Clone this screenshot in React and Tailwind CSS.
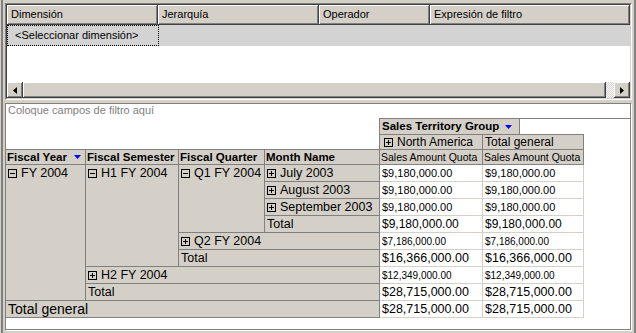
import React from 'react';

const raised = 'bg-[#d4d0c8] shadow-[inset_-1px_-1px_#404040,inset_1px_1px_#fff,inset_-2px_-2px_#808080]';

function ExpandBox({ minus }) {
  return (
    <svg width="9" height="9" viewBox="0 0 9 9" className="shrink-0">
      <rect x="0.5" y="0.5" width="8" height="8" fill="none" stroke="#000" />
      <line x1="2" y1="4.5" x2="7" y2="4.5" stroke="#000" />
      {!minus && <line x1="4.5" y1="2" x2="4.5" y2="7" stroke="#000" />}
    </svg>
  );
}

function BlueArrow() {
  return (
    <svg width="7" height="4" viewBox="0 0 7 4" className="shrink-0">
      <path d="M0 0H7L3.5 4Z" fill="#0000ff" />
    </svg>
  );
}

function ScrollButton({ dir }) {
  return (
    <div className={`w-[16px] h-full flex items-center justify-center ${raised}`}>
      <svg width="4" height="7" viewBox="0 0 4 7">
        <path d={dir === 'left' ? 'M4 0V7L0 3.5Z' : 'M0 0V7L4 3.5Z'} fill="#000" />
      </svg>
    </div>
  );
}

const filterCols = [
  { label: 'Dimensión', w: 'w-[151px]' },
  { label: 'Jerarquía', w: 'w-[161px]' },
  { label: 'Operador', w: 'w-[111px]' },
  { label: 'Expresión de filtro', w: 'w-[200px]' }
];

// row header cell (gray) in the pivot
function Head({ className, children, size = 'text-[12.5px]' }) {
  return (
    <div className={`bg-[#d4d0c8] border-r border-b border-[#808080] flex items-start gap-[4px] pl-[2px] h-full leading-[16px] whitespace-nowrap ${size} ${className}`}>
      {children}
    </div>
  );
}

const values = [
  { v: '$9,180,000.00', size: 'text-[11px]' },
  { v: '$9,180,000.00', size: 'text-[11px]' },
  { v: '$9,180,000.00', size: 'text-[11px]' },
  { v: '$9,180,000.00', size: 'text-[12px]' },
  { v: '$7,186,000.00', size: 'text-[10px]' },
  { v: '$16,366,000.00', size: 'text-[12.5px]' },
  { v: '$12,349,000.00', size: 'text-[10px]' },
  { v: '$28,715,000.00', size: 'text-[12.5px]' },
  { v: '$28,715,000.00', size: 'text-[12.5px]' }
];

const rowStart = ['row-start-4', 'row-start-5', 'row-start-6', 'row-start-7', 'row-start-8', 'row-start-9', 'row-start-10', 'row-start-11', 'row-start-12'];

export default function App() {
  return (
    <div className="w-[636px] h-[333px] bg-[#d4d0c8] overflow-hidden pl-px border-r-2 border-r-[#808080] font-['Liberation_Sans',Arial,sans-serif] text-black">
      <div className="h-full border-l-2 border-l-[#808080] pl-[2px] flex flex-col">
        {/* filter grid */}
        <div className="mt-[3px] w-[627px] h-[97px] border border-t-[#808080] border-l-[#808080] border-r-white border-b-white">
          <div className="h-full border border-t-[#404040] border-l-[#404040] border-r-[#d4d0c8] border-b-[#d4d0c8] flex flex-col bg-white">
            <div className="flex h-[20px]">
              {filterCols.map((c) => (
                <div key={c.label} className={`${c.w} ${raised} text-[11px] leading-[19px] pl-[4px]`}>
                  {c.label}
                </div>
              ))}
            </div>
            <div className="flex h-[21px] bg-[#d3d3d3]">
              <div className="w-[152px] border border-dotted border-black text-[11px] leading-[19px] pl-[7px]">
                &lt;Seleccionar dimensión&gt;
              </div>
            </div>
            <div className="flex-1" />
            <div className="flex h-[16px]">
              <ScrollButton dir="left" />
              <div className={`w-[583px] h-full ${raised}`} />
              <div className="w-[8px] h-full bg-[repeating-conic-gradient(#fff_0_25%,#d4d0c8_0_50%)] bg-[length:2px_2px]" />
              <ScrollButton dir="right" />
            </div>
          </div>
        </div>

        {/* pivot table */}
        <div className="mt-[3px] w-[626px] h-[227px] border border-[#808080] shadow-[1px_1px_0_#fff] bg-white flex flex-col">
          <div className="h-[14px] text-[11px] leading-[13px] text-[#808080] pl-[2px]">Coloque campos de filtro aquí</div>
          <div className="flex-1 grid grid-cols-[80px_93px_86px_115px_103px_101px_1fr] grid-rows-[17px_15px_15px_repeat(9,17px)_1fr]">
            {/* column area */}
            <div className="col-start-1 col-end-5 row-start-1 row-end-3 border-r border-b border-[#808080]" />
            <div className="col-start-5 col-end-7 row-start-1 border-t border-b border-[#808080] flex">
              <div className="w-[140px] bg-[#d4d0c8] border-r border-[#808080] flex items-center gap-[6px] pl-[2px] text-[11.5px] font-bold leading-[15px] whitespace-nowrap">
                Sales Territory Group
                <BlueArrow />
              </div>
            </div>
            <div className="col-start-7 row-start-1 border-t border-[#808080]" />
            <div className="col-start-5 row-start-2 bg-[#d4d0c8] border-r border-b border-[#808080] flex items-center gap-[4px] pl-[4px] text-[12px] leading-[14px] whitespace-nowrap">
              <ExpandBox />
              North America
            </div>
            <div className="col-start-6 row-start-2 bg-[#d4d0c8] border-r border-b border-[#808080] pl-[2px] text-[12px] leading-[14px] whitespace-nowrap">
              Total general
            </div>

            {/* row header titles */}
            <div className="col-start-1 row-start-3 bg-[#d4d0c8] border-r border-b border-[#808080] flex items-center gap-[7px] pl-[1px] text-[11.5px] font-bold leading-[14px] whitespace-nowrap">
              Fiscal Year
              <BlueArrow />
            </div>
            <div className="col-start-2 row-start-3 bg-[#d4d0c8] border-r border-b border-[#808080] pl-[1px] text-[11.5px] font-bold leading-[14px] whitespace-nowrap overflow-hidden">
              Fiscal Semester
            </div>
            <div className="col-start-3 row-start-3 bg-[#d4d0c8] border-r border-b border-[#808080] pl-[1px] text-[11.5px] font-bold leading-[14px] whitespace-nowrap">
              Fiscal Quarter
            </div>
            <div className="col-start-4 row-start-3 bg-[#d4d0c8] border-r border-b border-[#808080] pl-[1px] text-[11.5px] font-bold leading-[14px] whitespace-nowrap">
              Month Name
            </div>
            <div className="col-start-5 row-start-3 bg-[#d4d0c8] border-r border-b border-[#808080] pl-[1px] text-[10.5px] leading-[14px] whitespace-nowrap overflow-hidden">
              Sales Amount Quota
            </div>
            <div className="col-start-6 row-start-3 bg-[#d4d0c8] border-r border-b border-[#808080] pl-[1px] text-[10.5px] leading-[14px] whitespace-nowrap overflow-hidden">
              Sales Amount Quota
            </div>

            {/* row headers */}
            <Head className="col-start-1 row-start-4 row-end-12">
              <span className="h-[16px] flex items-center"><ExpandBox minus /></span>
              FY 2004
            </Head>
            <Head className="col-start-2 row-start-4 row-end-10">
              <span className="h-[16px] flex items-center"><ExpandBox minus /></span>
              H1 FY 2004
            </Head>
            <Head className="col-start-3 row-start-4 row-end-8">
              <span className="h-[16px] flex items-center"><ExpandBox minus /></span>
              Q1 FY 2004
            </Head>
            <Head className="col-start-4 row-start-4">
              <span className="h-[16px] flex items-center"><ExpandBox /></span>
              July 2003
            </Head>
            <Head className="col-start-4 row-start-5">
              <span className="h-[16px] flex items-center"><ExpandBox /></span>
              August 2003
            </Head>
            <Head className="col-start-4 row-start-6">
              <span className="h-[16px] flex items-center"><ExpandBox /></span>
              September 2003
            </Head>
            <Head className="col-start-4 row-start-7">Total</Head>
            <Head className="col-start-3 col-end-5 row-start-8">
              <span className="h-[16px] flex items-center"><ExpandBox /></span>
              Q2 FY 2004
            </Head>
            <Head className="col-start-3 col-end-5 row-start-9">Total</Head>
            <Head className="col-start-2 col-end-5 row-start-10">
              <span className="h-[16px] flex items-center"><ExpandBox /></span>
              H2 FY 2004
            </Head>
            <Head className="col-start-2 col-end-5 row-start-11">Total</Head>
            <Head className="col-start-1 col-end-5 row-start-12" size="text-[14px]">Total general</Head>

            {/* values */}
            {values.map((r, i) => (
              <React.Fragment key={i}>
                <div className={`col-start-5 ${rowStart[i]} border-r border-b border-[#d4d0c8] pl-[2px] flex items-center whitespace-nowrap ${r.size}`}>
                  {r.v}
                </div>
                <div className={`col-start-6 ${rowStart[i]} border-r border-b border-[#d4d0c8] pl-[2px] flex items-center whitespace-nowrap ${r.size}`}>
                  {r.v}
                </div>
              </React.Fragment>
            ))}
          </div>
        </div>
      </div>
    </div>
  );
}
